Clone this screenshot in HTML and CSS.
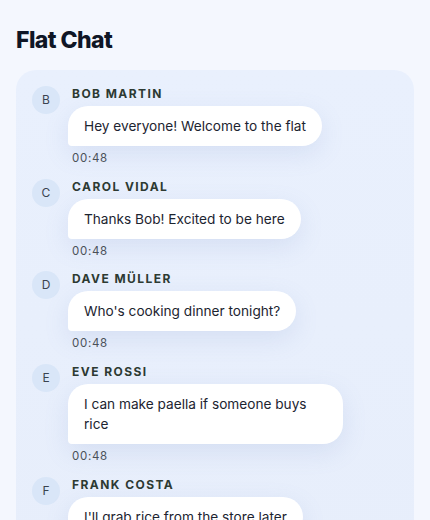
FILE: index.html
```html
<!DOCTYPE html>
<html lang="en">
<head>
<meta charset="utf-8">
<title>Flat Chat</title>
<link rel="stylesheet" href="styles.css">
</head>
<body>
<h1 class="title">Flat Chat</h1>
<div class="chat">
  <div class="msg">
    <div class="avatar">B</div>
    <div class="body">
      <div class="name">Bob Martin</div>
      <div class="bubble">Hey everyone! Welcome to the flat</div>
      <div class="time">00:48</div>
    </div>
  </div>
  <div class="msg">
    <div class="avatar">C</div>
    <div class="body">
      <div class="name">Carol Vidal</div>
      <div class="bubble">Thanks Bob! Excited to be here</div>
      <div class="time">00:48</div>
    </div>
  </div>
  <div class="msg">
    <div class="avatar">D</div>
    <div class="body">
      <div class="name">Dave Müller</div>
      <div class="bubble">Who's cooking dinner tonight?</div>
      <div class="time">00:48</div>
    </div>
  </div>
  <div class="msg">
    <div class="avatar">E</div>
    <div class="body">
      <div class="name">Eve Rossi</div>
      <div class="bubble">I can make paella if someone buys rice</div>
      <div class="time">00:48</div>
    </div>
  </div>
  <div class="msg">
    <div class="avatar">F</div>
    <div class="body">
      <div class="name">Frank Costa</div>
      <div class="bubble">I'll grab rice from the store later</div>
      <div class="time">00:48</div>
    </div>
  </div>
</div>
</body>
</html>
```

FILE: styles.css
```css
body {
  margin: 0;
  padding: 0 16px;
  background-color: #f4f7fe;
  font-family: Inter, "Noto Sans", sans-serif;
  color: #1c2430;
}
.title {
  margin: 0;
  padding: 24px 0 14px;
  font-size: 23px;
  line-height: 32px;
  font-weight: 800;
  letter-spacing: -0.025em;
  color: #0f1626;
}
.chat {
  background: linear-gradient(180deg, #e9f0fd 0%, #e7eefb 100%);
  border-radius: 20px;
  padding: 16px;
  display: flex;
  flex-direction: column;
  gap: 12.7px;
}
.msg {
  display: flex;
  align-items: flex-start;
  gap: 12px;
}
.avatar {
  width: 28px;
  height: 28px;
  border-radius: 50%;
  background: #d9e6f8;
  color: #3a4350;
  font-size: 12px;
  line-height: 28px;
  text-align: center;
  flex-shrink: 0;
}
.body {
  display: flex;
  flex-direction: column;
  align-items: flex-start;
  min-width: 0;
}
.name {
  font-size: 12px;
  line-height: 16px;
  font-weight: 700;
  letter-spacing: 0.12em;
  text-transform: uppercase;
  color: #2d3a32;
}
.bubble {
  margin: 4px 0 4px -4px;
  max-width: 275px;
  box-sizing: border-box;
  padding: 10px 16px;
  background: #ffffff;
  border-radius: 20px 20px 20px 4px;
  font-size: 13.65px;
  line-height: 20px;
  color: #1c2430;
  box-shadow: 0 8px 24px rgba(120, 145, 200, 0.16);
}
.time {
  font-size: 11.5px;
  line-height: 16px;
  letter-spacing: 0.06em;
  color: #4a5058;
}
```
